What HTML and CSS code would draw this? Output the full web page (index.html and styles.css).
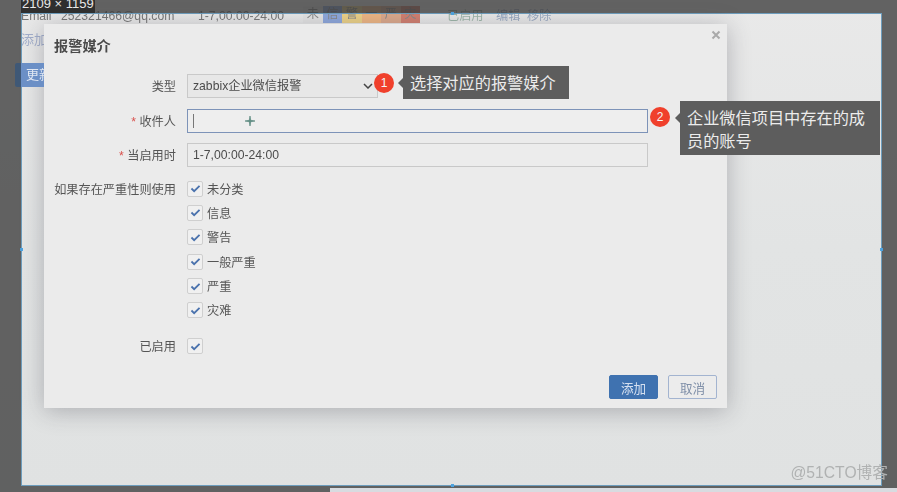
FILE: index.html
```html
<!DOCTYPE html>
<html lang="zh-CN">
<head>
    <meta charset="UTF-8">
    <title>报警媒介</title>
    <link rel="stylesheet" href="styles.css">
</head>
<body>
    <!-- page underneath the dim mask -->
    <div class="under-row">
        <span class="u-type">Email</span>
        <span class="u-addr">252321466@qq.com</span>
        <span class="u-time">1-7,00:00-24:00</span>
        <div class="sev-tags">
            <span class="tag tag-none">未</span>
            <span class="tag tag-info">信</span>
            <span class="tag tag-warn">警</span>
            <span class="tag tag-avg">一</span>
            <span class="tag tag-high">严</span>
            <span class="tag tag-dis">灾</span>
        </div>
        <span class="u-on">已启用</span>
        <span class="u-link u-edit">编辑</span>
        <span class="u-link u-del">移除</span>
    </div>
    <div class="under-add">添加</div>
    <div class="under-btn">更新</div>

    <!-- screenshot selection -->
    <div class="selection">
        <i class="handle h-top"></i>
        <i class="handle h-left"></i>
        <i class="handle h-right"></i>
        <i class="handle h-bottom"></i>

        <div class="dialog">
            <div class="dialog-title">报警媒介</div>
            <svg class="close" viewBox="0 0 10 10" width="10" height="10">
                <path d="M1.5 1.5 L8.5 8.5 M8.5 1.5 L1.5 8.5" stroke="#a9a9a9" stroke-width="2" fill="none"/>
            </svg>

            <div class="form">
                <div class="label">类型</div>
                <div class="field field-select">
                    <span>zabbix企业微信报警</span>
                    <svg viewBox="0 0 10 6" width="10" height="6">
                        <path d="M1 1 L5 5 L9 1" stroke="#444" stroke-width="1.5" fill="none"/>
                    </svg>
                </div>

                <div class="label"><b>*</b> 收件人</div>
                <div class="field field-focus">
                    <i class="caret"></i>
                    <svg class="cross" viewBox="0 0 10 10" width="10" height="10">
                        <path d="M5 0 L5.7 4.3 L10 5 L5.7 5.7 L5 10 L4.3 5.7 L0 5 L4.3 4.3 Z" stroke="#5b8a80" stroke-width="0.7" fill="#5b8a80"/>
                    </svg>
                </div>

                <div class="label"><b>*</b> 当启用时</div>
                <div class="field">1-7,00:00-24:00</div>

                <div class="label label-check">如果存在严重性则使用</div>
                <div class="check-list">
                    <label class="check"><i class="box"><svg viewBox="0 0 12 10" width="11" height="9"><path d="M1.5 5 L4.5 8 L10.5 2" stroke="#4a72ad" stroke-width="2" fill="none"/></svg></i>未分类</label>
                    <label class="check"><i class="box"><svg viewBox="0 0 12 10" width="11" height="9"><path d="M1.5 5 L4.5 8 L10.5 2" stroke="#4a72ad" stroke-width="2" fill="none"/></svg></i>信息</label>
                    <label class="check"><i class="box"><svg viewBox="0 0 12 10" width="11" height="9"><path d="M1.5 5 L4.5 8 L10.5 2" stroke="#4a72ad" stroke-width="2" fill="none"/></svg></i>警告</label>
                    <label class="check"><i class="box"><svg viewBox="0 0 12 10" width="11" height="9"><path d="M1.5 5 L4.5 8 L10.5 2" stroke="#4a72ad" stroke-width="2" fill="none"/></svg></i>一般严重</label>
                    <label class="check"><i class="box"><svg viewBox="0 0 12 10" width="11" height="9"><path d="M1.5 5 L4.5 8 L10.5 2" stroke="#4a72ad" stroke-width="2" fill="none"/></svg></i>严重</label>
                    <label class="check"><i class="box"><svg viewBox="0 0 12 10" width="11" height="9"><path d="M1.5 5 L4.5 8 L10.5 2" stroke="#4a72ad" stroke-width="2" fill="none"/></svg></i>灾难</label>
                </div>

                <div class="label label-on">已启用</div>
                <div class="check-on">
                    <i class="box"><svg viewBox="0 0 12 10" width="11" height="9"><path d="M1.5 5 L4.5 8 L10.5 2" stroke="#4a72ad" stroke-width="2" fill="none"/></svg></i>
                </div>
            </div>

            <div class="dialog-foot">
                <button class="btn btn-primary">添加</button>
                <button class="btn btn-plain">取消</button>
            </div>
        </div>

        <!-- Callouts -->
        <div class="num num-1">1</div>
        <div class="tip tip-1">选择对应的报警媒介</div>
        <div class="num num-2">2</div>
        <div class="tip tip-2">企业微信项目中存在的成员的账号</div>
    </div>

    <div class="size-label">2109 × 1159</div>
    <div class="bottom-strip"></div>
    <div class="watermark">@51CTO博客</div>
</body>
</html>
```

FILE: styles.css
```css
* {
    box-sizing: border-box;
}
html, body {
    height: 100%;
}
body {
    margin: 0;
    overflow: hidden;
    position: relative;
    font-family: "Liberation Sans", "Noto Sans CJK SC", sans-serif;
    font-size: 12.2px;
    color: #555;
    background: linear-gradient(180deg, #e9e9e9 0%, #e2e4e4 50%, #e0e2e2 100%);
    filter: blur(0.4px);
}
i {
    font-style: normal;
}

/* Page under the mask */
.under-row {
    position: absolute;
    top: 8px;
    left: 21px;
    right: 0;
    height: 16px;
    line-height: 16px;
    font-size: 12.2px;
    color: #777;
}
.under-row span {
    position: absolute;
    top: 0;
}
.u-addr { left: 40px; }
.u-time { left: 177px; }
.u-on { left: 426px; color: #9db5a8; }
.u-link { color: #98a8c0; }
.u-edit { left: 475px; }
.u-del { left: 506px; }
.sev-tags {
    position: absolute;
    left: 282px;
    top: -2px;
    display: flex;
    width: 117px;
    height: 17px;
}
.under-row .tag {
    position: static;
    flex: 1;
    text-align: center;
    line-height: 17px;
    color: #888;
}
.tag-none { background: #e4e4e4; }
.tag-info { background: #8ea8dc; }
.tag-warn { background: #ecd288; }
.tag-avg { background: #eeb684; }
.tag-high { background: #dca98c; }
.tag-dis { background: #d27f70; }
.under-add {
    position: absolute;
    top: 29px;
    left: 21px;
    font-size: 13px;
    color: #a2aecb;
}
.under-btn {
    position: absolute;
    z-index: 1;
    top: 63px;
    left: 15px;
    width: 29px;
    height: 24px;
    padding-left: 11px;
    line-height: 24px;
    font-size: 13px;
    white-space: nowrap;
    overflow: hidden;
    color: #dfe6f2;
    background: linear-gradient(90deg, #3f5876 6px, #6b8fc6 6px);
    border-radius: 2px 0 0 2px;
}

/* Selection and dim mask */
.selection {
    position: absolute;
    left: 21px;
    top: 13px;
    width: 861px;
    height: 473px;
    padding: 10px 0 0 22px;
    border: 1px solid #6d9dbd;
    box-shadow: 0 0 0 1000px rgba(60, 60, 60, 0.78);
}
.handle {
    position: absolute;
    width: 3px;
    height: 3px;
    background: #4da3e0;
}
.h-top { top: -2px; left: 429px; }
.h-bottom { bottom: -2px; left: 429px; }
.h-left { left: -2px; top: 234px; }
.h-right { right: -2px; top: 234px; }
.size-label {
    position: absolute;
    left: 21px;
    top: -6px;
    width: 74px;
    height: 19px;
    padding-left: 1px;
    line-height: 19px;
    font-size: 13px;
    white-space: nowrap;
    color: #e8e8e8;
    background: #2f2f2f;
}
.bottom-strip {
    position: absolute;
    left: 330px;
    right: 0;
    bottom: 0;
    height: 4px;
    background: #d8dbe0;
}
.watermark {
    position: absolute;
    right: 9px;
    top: 463px;
    font-size: 15.7px;
    line-height: 20px;
    color: #b0b2b2;
}

/* Dialog */
.dialog {
    position: relative;
    display: flex;
    flex-direction: column;
    width: 683px;
    height: 384px;
    padding: 0 10px 9px;
    background: #ebebeb;
    box-shadow: 0 3px 22px rgba(60, 60, 70, 0.32);
}
.dialog-title {
    height: 50px;
    padding-top: 13px;
    font-size: 14.2px;
    line-height: 18px;
    font-weight: bold;
    color: #4a4a4a;
}
.close {
    position: absolute;
    top: 6px;
    right: 6px;
}
.form {
    display: grid;
    grid-template-columns: 122px 461px;
    column-gap: 11px;
    row-gap: 10.5px;
}
.label {
    padding-top: 2px;
    line-height: 22px;
    text-align: right;
    white-space: nowrap;
    color: #555;
}
.label b {
    font-weight: normal;
    color: #d9534f;
}
.label-check {
    padding-top: 1px;
    margin-top: 3px;
    line-height: 16px;
}
.label-on {
    padding-top: 1px;
    margin-top: 9.5px;
    line-height: 16px;
}
.field {
    height: 24px;
    padding: 0 5px;
    line-height: 23px;
    color: #4c4c4c;
    background: #ececec;
    border: 1px solid #c9c9c9;
}
.field-select {
    display: flex;
    align-items: center;
    justify-content: space-between;
    width: 191px;
    padding-right: 4px;
    background: #e7e7e7;
}
.field-select span {
    padding-top: 1px;
}
.field-focus {
    position: relative;
    border-color: #7d93b8;
    background: #eeeeee;
}
.caret {
    position: absolute;
    left: 5px;
    top: 4px;
    width: 1px;
    height: 14px;
    background: #777;
}
.cross {
    position: absolute;
    left: 57px;
    top: 6px;
}
.check-list {
    display: flex;
    flex-direction: column;
    gap: 8.4px;
    margin-top: 3px;
}
.check {
    display: flex;
    align-items: flex-start;
    gap: 4px;
    height: 16px;
    line-height: 18px;
    color: #555;
}
.check-on {
    margin-top: 9.5px;
    height: 16px;
}
.box {
    display: flex;
    align-items: center;
    justify-content: center;
    width: 16px;
    height: 16px;
    background: #f0f0f0;
    border: 1px solid #cfcfcf;
    border-radius: 2px;
}
.dialog-foot {
    display: flex;
    justify-content: flex-end;
    gap: 10px;
    margin-top: auto;
}
.btn {
    width: 49px;
    height: 24px;
    padding: 0;
    font-family: inherit;
    font-size: 12.6px;
    border-radius: 2px;
}
.btn-primary {
    color: #d5e0f0;
    background: #3f72b0;
    border: 1px solid #3f72b0;
}
.btn-plain {
    color: #7f8fa8;
    background: #ececec;
    border: 1.5px solid #a3b4d0;
}

/* Callouts */
.num {
    position: absolute;
    width: 20px;
    height: 20px;
    line-height: 20px;
    text-align: center;
    font-size: 12px;
    color: #f5f5f5;
    background: #f0402c;
    border-radius: 50%;
}
.num-1 { left: 352px; top: 59px; }
.num-2 { left: 628px; top: 93px; }
.tip {
    position: absolute;
    padding: 0 7px;
    font-size: 16.2px;
    color: #ececec;
    background: #5d5d5d;
}
.tip::before {
    content: "";
    position: absolute;
    left: -5px;
    border-top: 5px solid transparent;
    border-bottom: 5px solid transparent;
    border-right: 5px solid #5d5d5d;
}
.tip-1 {
    left: 381px;
    top: 52px;
    width: 166px;
    height: 33px;
    line-height: 35px;
    white-space: nowrap;
}
.tip-1::before { top: 12px; }
.tip-2 {
    left: 658px;
    top: 87px;
    width: 200px;
    height: 54px;
    padding-top: 6px;
    line-height: 23px;
}
.tip-2::before { top: 12px; }
```
